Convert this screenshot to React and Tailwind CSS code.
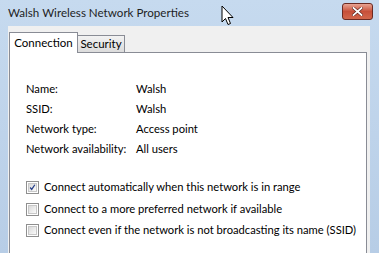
export default function App() {
  const info = [
    ["Name:", "Walsh"],
    ["SSID:", "Walsh"],
    ["Network type:", "Access point"],
    ["Network availability:", "All users"],
  ];
  const options = [
    ["Connect automatically when this network is in range", true],
    ["Connect to a more preferred network if available", false],
    ["Connect even if the network is not broadcasting its name (SSID)", false],
  ];

  return (
    <div
      className="relative w-[379px] h-[253px] overflow-hidden flex flex-col bg-gradient-to-b from-[#c6daef] to-[#b7cde6] text-black whitespace-nowrap"
      style={{ fontFamily: 'Lato, "Liberation Sans", sans-serif' }}
    >
      {/* title bar */}
      <div className="h-[26px] shrink-0 flex items-center justify-between pl-[8px] pr-[6px]">
        <span className="text-[11.6px] leading-none text-[#1e1e1e]">Walsh Wireless Network Properties</span>
        <div className="w-[31px] h-[17px] mt-[-4px] rounded-[3px] border border-[#6b2a22] bg-gradient-to-b from-[#e8a493] via-[#c7503a] to-[#d2674c] flex items-center justify-center">
          <svg width="11" height="9" viewBox="0 0 11 9">
            <path d="M1.5 1 L9.5 8 M9.5 1 L1.5 8" stroke="#5a2018" strokeWidth="3" strokeLinecap="square" />
            <path d="M1.5 1 L9.5 8 M9.5 1 L1.5 8" stroke="#ffffff" strokeWidth="1.8" strokeLinecap="square" />
          </svg>
        </div>
      </div>

      {/* client area */}
      <div className="flex-1 ml-[8px] w-[362px] bg-[#f0f0f0] pt-[6px] pl-[1px] flex flex-col">
        <div className="flex items-end h-[21px] relative z-10">
          <div className="w-[69px] h-[21px] bg-white border border-b-0 border-[#898c95] flex items-center justify-center text-[11.5px]">
            Connection
          </div>
          <div className="w-[47px] h-[17px] mb-[1px] bg-gradient-to-b from-[#f2f2f2] to-[#dcdcdc] border border-l-0 border-b-0 border-[#898c95] flex items-center justify-center text-[11.5px]">
            Security
          </div>
        </div>
        <div className="-mt-[1px] w-[358px] flex-1 bg-white border border-b-0 border-[#898c95] text-[11.2px]">
          <div className="pt-[26px] pl-[16px] flex flex-col">
            {info.map(([k, v]) => (
              <div key={k} className="flex h-[20px] items-center">
                <span className="w-[110px]">{k}</span>
                <span>{v}</span>
              </div>
            ))}
          </div>
          <div className="mt-[18px] pl-[16px] flex flex-col">
            {options.map(([label, checked]) => (
              <div key={label} className="flex h-[21.5px] items-center gap-[5px]">
                <div className="w-[13px] h-[13px] border border-[#8f8f8f] bg-white p-[1px] shrink-0">
                  <div className="w-full h-full bg-gradient-to-br from-[#d9d9d9] to-[#fbfbfb] border border-[#c8c8c8] flex items-center justify-center">
                    {checked && (
                      <svg width="9" height="9" viewBox="0 0 9 9">
                        <path d="M1.5 4.5 L3.5 7 L7.5 1" fill="none" stroke="#27408a" strokeWidth="1.6" />
                      </svg>
                    )}
                  </div>
                </div>
                <span>{label}</span>
              </div>
            ))}
          </div>
        </div>
      </div>

      {/* mouse cursor */}
      <svg className="absolute left-[221px] top-[5px]" width="14" height="22" viewBox="0 0 14 22">
        <path d="M1 1 L1 17 L4.5 13.5 L7 19.5 L9.5 18.5 L7 12.5 L12 12.5 Z" fill="#ffffff" stroke="#000000" strokeWidth="1" strokeLinejoin="round" />
      </svg>
    </div>
  );
}
